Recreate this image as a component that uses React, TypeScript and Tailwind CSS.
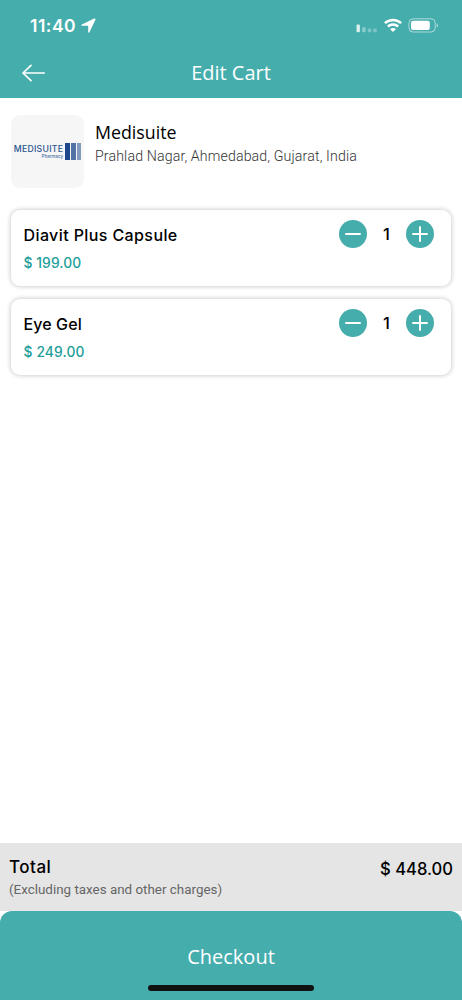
const items = [
  { id: 1, name: 'Diavit Plus Capsule', price: '$ 199.00', qty: 1, nameClass: 'tracking-[0.4px]', priceClass: 'tracking-[0.1px]' },
  { id: 2, name: 'Eye Gel', price: '$ 249.00', qty: 1, nameClass: 'tracking-[0.1px]', priceClass: 'tracking-[0.15px]' },
]

function StatusBar() {
  return (
    <div className="flex h-[52px] items-center pl-[30px] pr-[23px] text-white">
      <span className="w-[46px] whitespace-nowrap font-['Inter',sans-serif] text-[17.5px] font-semibold leading-5 tracking-[0.5px]">11:40</span>
      <svg className="mb-[2px] ml-[5px]" width="15" height="15" viewBox="0 0 15 15" fill="currentColor">
        <path d="M13.2.6.9 6.4c-.9.4-.7 1.4.3 1.4h5.7c.2 0 .3.1.3.3v5.7c0 1 1 1.2 1.4.3L14.4 1.8C14.8.9 14.1.2 13.2.6z" />
      </svg>

      {/* Signal */}
      <svg className="ml-auto mt-[4px]" width="22" height="9" viewBox="0 0 22 9" fill="currentColor">
        <rect x="0.5" y="0.5" width="3.4" height="7.7" rx="1" opacity=".8" />
        <rect x="6.2" y="3.2" width="3.4" height="5" rx="1" opacity=".38" />
        <rect x="11.7" y="4.4" width="3.6" height="3.8" rx="1" opacity=".3" />
        <rect x="17.2" y="4.4" width="3.6" height="3.8" rx="1" opacity=".3" />
      </svg>

      {/* Wifi */}
      <svg className="ml-[6px] mt-[-2px]" width="18" height="14" viewBox="0 0 18 14" fill="none" stroke="currentColor" strokeWidth="2.5">
        <path d="M.9 5.2a11.6 11.6 0 0 1 16.2 0" />
        <path d="M3.9 8.5a7.3 7.3 0 0 1 10.2 0" />
        <path d="M9 14 6.2 11.2a3.9 3.9 0 0 1 5.6 0z" fill="currentColor" stroke="none" />
      </svg>

      {/* Battery */}
      <svg className="ml-[6px] mt-[-2px]" width="31" height="15" viewBox="0 0 31 15" fill="none">
        <rect x="1" y=".8" width="26.2" height="13.2" rx="4" stroke="currentColor" strokeOpacity=".55" />
        <rect x="3" y="2.8" width="18.8" height="9.2" rx="2" fill="currentColor" />
        <path d="M28.7 5.2c1.6.6 1.6 3.8 0 4.4z" fill="currentColor" opacity=".6" />
      </svg>
    </div>
  )
}

function QtyButton({ plus = false }: { plus?: boolean }) {
  return (
    <button
      aria-label={plus ? 'Increase quantity' : 'Decrease quantity'}
      className="flex size-7 items-center justify-center rounded-full bg-[#45adac] text-white"
    >
      <svg width="18" height="18" viewBox="0 0 18 18" fill="none" stroke="currentColor" strokeWidth="2" strokeLinecap="round">
        <path d="M2 9h14" />
        {plus && <path d="M9 2v14" />}
      </svg>
    </button>
  )
}

export default function App() {
  return (
    <div className="flex h-[1000px] w-[462px] flex-col overflow-hidden bg-white">
      <header className="h-[98px] shrink-0 bg-[#45adac]">
        <StatusBar />
        <div className="grid h-[42px] grid-cols-[1fr_auto_1fr] items-center px-[21px] text-white">
          <button aria-label="Back">
            <svg width="25" height="18" viewBox="0 0 25 18" fill="none" stroke="currentColor" strokeWidth="1.7" strokeLinecap="round" strokeLinejoin="round">
              <path d="M10 1.3 2 9l8 7.7M2 9h21.2" />
            </svg>
          </button>
          <h1 className="pb-px font-['Open_Sans',sans-serif] text-[20px] leading-6">Edit Cart</h1>
        </div>
      </header>

      {/* Store */}
      <section className="flex h-[89px] pl-[11px] pt-[17px]">
        <div className="flex size-[72.5px] items-center justify-center gap-[1.5px] rounded-[9px] bg-[#f6f6f6]">
          <div className="flex flex-col items-end pt-[1px] font-['Inter',sans-serif]">
            <span className="text-[8.7px] font-medium leading-[9px] tracking-[0.25px] text-[#2b5590]">MEDISUITE</span>
            <span className="text-[4.5px] font-medium leading-[5px] text-[#4a70a4]">Pharmacy</span>
          </div>
          <div className="flex h-[17px] gap-px">
            <div className="w-[5px] bg-[#1c478a]" />
            <div className="w-[5px] bg-[#5173a5]" />
            <div className="w-1 bg-[#8399bd]" />
          </div>
        </div>
        <div className="ml-[11.5px] pt-[5px]">
          <h2 className="font-['Open_Sans',sans-serif] text-[17.8px] leading-6 text-black">Medisuite</h2>
          <p className="font-['Roboto',sans-serif] text-[14.2px] font-light leading-6 tracking-[0.12px] text-[#333]">
            Prahlad Nagar, Ahmedabad, Gujarat, India
          </p>
        </div>
      </section>

      {/* Cart items */}
      <main className="flex flex-1 flex-col gap-[13px] px-[11px] pt-[23px]">
        {items.map(item => (
          <div
            key={item.id}
            className="flex h-[76px] shrink-0 justify-between rounded-[9px] bg-white pl-[12.5px] pr-[17px] pt-[10px] shadow-[0_0_4px_1px_rgba(0,0,0,0.18)]"
          >
            <div className="pt-[3px] font-['Inter',sans-serif] font-medium">
              <h3 className={`text-[16px] leading-6 text-black ${item.nameClass}`}>{item.name}</h3>
              <p className={`mt-1 text-[13.8px] leading-6 text-[#219e99] ${item.priceClass}`}>{item.price}</p>
            </div>
            <div className="flex h-7 items-center">
              <QtyButton />
              <span className="w-[39px] text-center font-['Inter',sans-serif] text-[16.5px] font-medium leading-6 text-black">{item.qty}</span>
              <QtyButton plus />
            </div>
          </div>
        ))}
      </main>

      {/* Total */}
      <section className="flex h-[67.5px] shrink-0 justify-between bg-[#e5e5e5] pl-[9px] pr-[9px] pt-[12px]">
        <div>
          <p className="font-['Inter',sans-serif] text-[17px] font-medium leading-6 tracking-[0.5px] text-black">Total</p>
          <p className="pt-px font-['Roboto',sans-serif] text-[13.4px] leading-5 text-[#666]">(Excluding taxes and other charges)</p>
        </div>
        <p className="pt-[2px] font-['Inter',sans-serif] text-[16.6px] font-medium leading-6 text-black">$ 448.00</p>
      </section>

      <footer className="flex h-[89.5px] shrink-0 flex-col items-center rounded-t-[12px] bg-[#45adac] pt-[34px]">
        <button className="font-['Open_Sans',sans-serif] text-[20px] leading-6 text-white">Checkout</button>
        <div className="mt-[16px] h-[6px] w-[166px] rounded-full bg-[#111]" />
      </footer>
    </div>
  )
}
